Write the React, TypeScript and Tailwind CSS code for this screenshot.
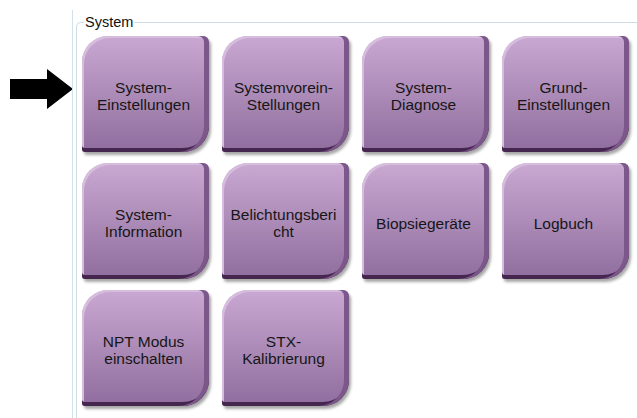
const buttons: string[][] = [
  ['System-', 'Einstellungen'],
  ['Systemvorein-', 'Stellungen'],
  ['System-', 'Diagnose'],
  ['Grund-', 'Einstellungen'],
  ['System-', 'Information'],
  ['Belichtungsberi', 'cht'],
  ['Biopsiegeräte'],
  ['Logbuch'],
  ['NPT Modus', 'einschalten'],
  ['STX-', 'Kalibrierung'],
];

function Tile({ lines }: { lines: string[] }) {
  return (
    <button
      className="w-[127px] h-[116px] flex flex-col items-center justify-center text-center
        rounded-tl-[26px] rounded-br-[26px] rounded-tr-[6px] rounded-bl-[3px]
        bg-gradient-to-b from-[#c9a8d2] via-[#ac8bb8] to-[#8f6d9e]
        shadow-[inset_-5px_0_0_#7b5889,inset_0_-4px_0_#45264f,inset_2px_2px_0_#d6bddd,2px_3px_3px_rgba(0,0,0,0.35)]
        text-[15.5px] leading-[17px] text-[#161616] pr-[4px] pt-[4px]"
    >
      {lines.map((l, i) => (
        <span key={i} className="whitespace-nowrap">
          {l}
        </span>
      ))}
    </button>
  );
}

export default function App() {
  return (
    <div className="w-[637px] h-[418px] bg-white flex overflow-hidden font-['Liberation_Sans',Arial,sans-serif]">
      <div className="w-[72px] shrink-0">
        <svg width="72" height="120" viewBox="0 0 72 120" className="block">
          <polygon points="10,79 47,79 47,69 73,89 47,109 47,99 10,99" fill="#000" />
        </svg>
      </div>
      <div className="flex-1 mt-[10px] border-l border-[#d3e1ea] pl-[3px]">
        <fieldset className="mt-[4px] border-l border-t border-[#cddce6] rounded-tl-[5px] pl-[5px] pt-[6px] h-[500px]">
          <legend className="ml-[2px] px-[1px] text-[14.5px] leading-[16px] text-[#111]">System</legend>
          <div className="grid grid-cols-[repeat(4,127px)] gap-x-[13px] gap-y-[11px]">
            {buttons.map((b, i) => (
              <Tile key={i} lines={b} />
            ))}
          </div>
        </fieldset>
      </div>
    </div>
  );
}
